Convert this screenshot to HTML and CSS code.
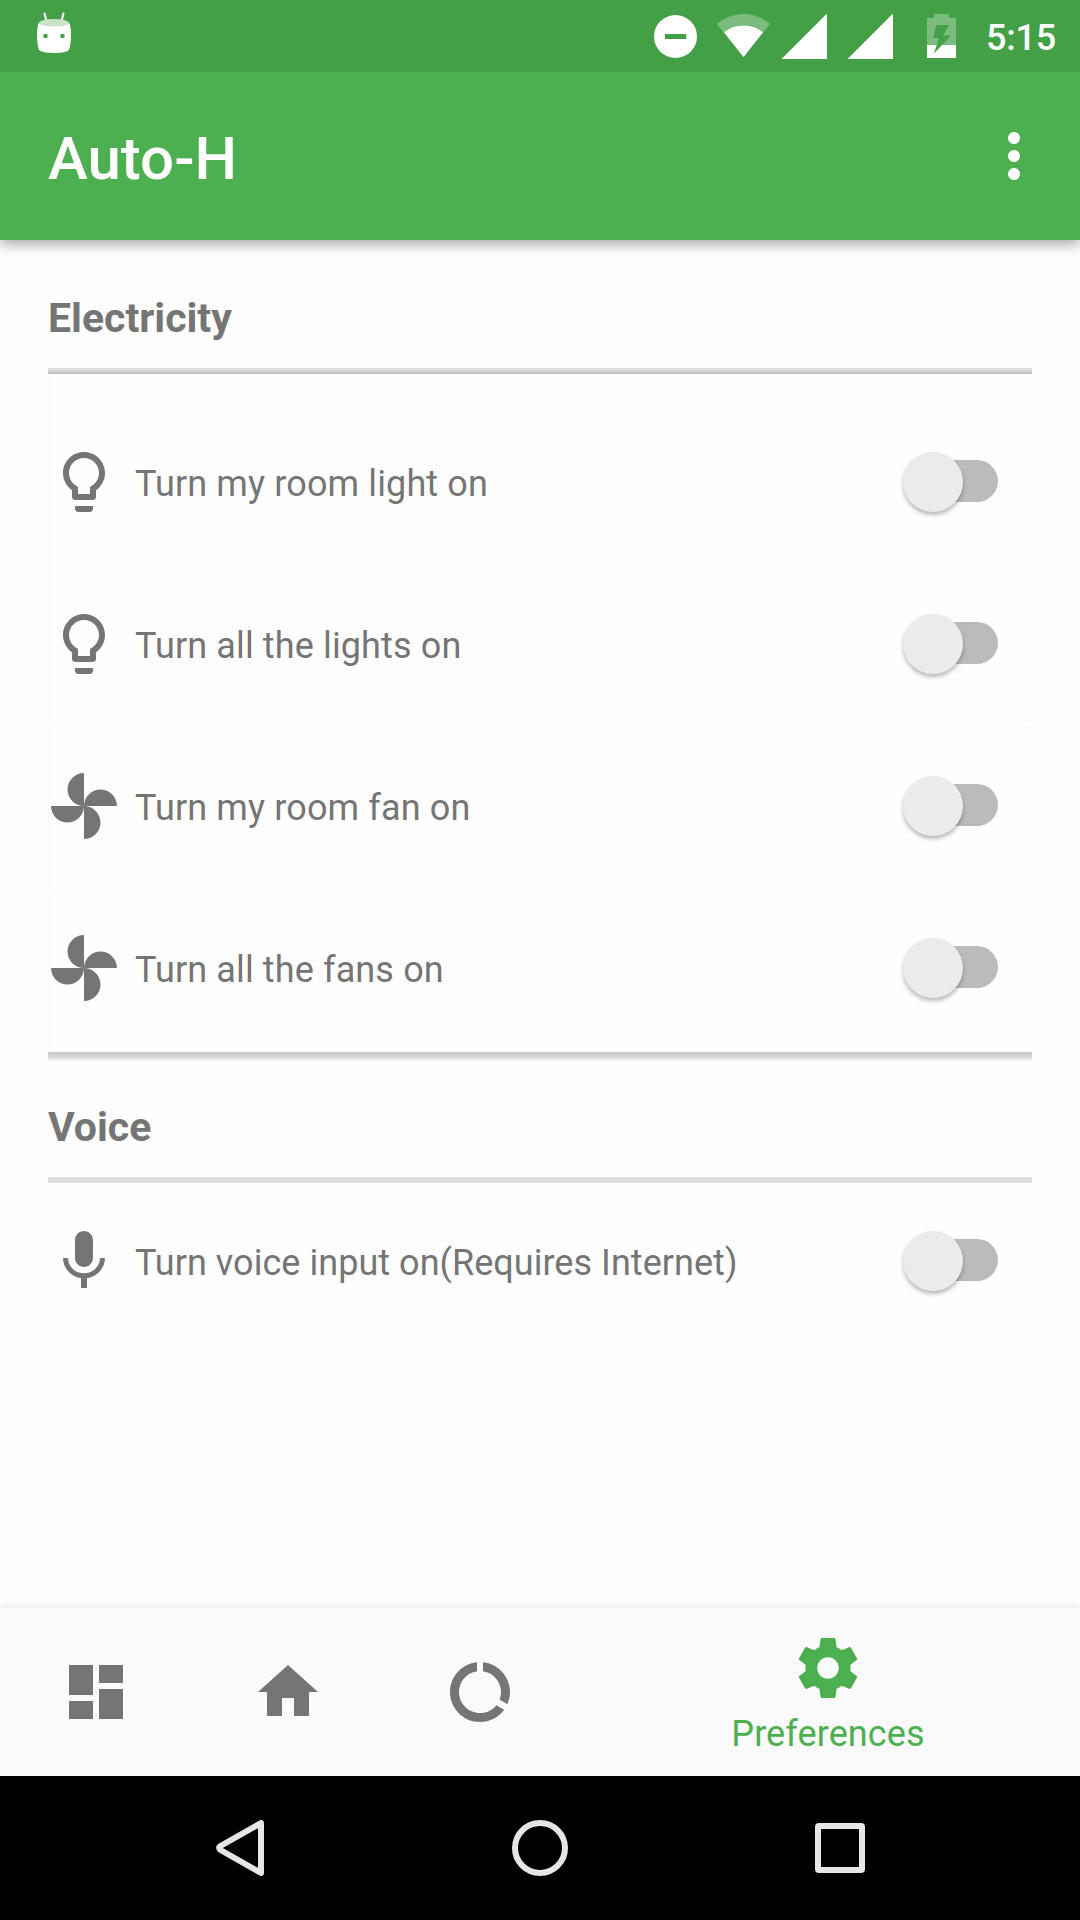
FILE: index.html
```html
<!DOCTYPE html>
<html lang="en">
<head>
<meta charset="utf-8">
<title>Auto-H</title>
<link rel="stylesheet" href="styles.css">
</head>
<body>
<div class="screen">
  <header class="header">
    <div class="status">
      <svg class="bot" width="36" height="44" viewBox="36 11 36 44"><path d="M44.500 13.500l2 8M63.500 13.500l-2 8" stroke="#fff" stroke-width="2" stroke-linecap="round" fill="none"/><path d="M39 22.500C41 27 67 27 69 22.500Q71 26 71 35Q71 44 69 50Q66 53 54 53Q42 53 39 50Q37 44 37 35Q37 26 39 22.500z" fill="#fff"/><ellipse cx="54" cy="22.800" rx="15" ry="3.700" fill="#c9e3ca"/><circle cx="45.500" cy="36" r="2.300" fill="#43a047"/><circle cx="62.500" cy="36" r="2.300" fill="#43a047"/></svg>
      <svg class="dnd" width="43" height="72" viewBox="654 0 43 72"><circle cx="675.500" cy="36.500" r="21.500" fill="#fff"/><path d="M665 34h21.300v5H665z" fill="#43a047"/></svg>
      <svg class="wifi" width="54" height="72" viewBox="717 0 54 72"><path d="M717 24Q729 14 743.500 14T770 24L743.500 57z" fill="#fff" opacity=".3"/><path d="M724 32.300Q732.500 25.500 743.500 25.500T763 32.300L743.500 57z" fill="#fff"/></svg>
      <svg class="signal-a" width="46" height="72" viewBox="782 0 46 72"><path d="M827 13.500V59H781.500z" fill="#fff"/></svg>
      <svg class="signal-b" width="46" height="72" viewBox="782 0 46 72"><path d="M827 13.500V59H781.500z" fill="#fff"/></svg>
      <svg class="battery" width="30" height="72" viewBox="927 0 30 72"><path d="M934 14h15v4h7v27h-29V18h7z" fill="#fff" opacity=".3"/><path d="M927 45h29v13h-29z" fill="#fff"/><path d="M936.500 25h12.500l-6 10.500h8L934 53.500l5-15.500h-5.800z" fill="#43a047"/></svg>
      <span class="time">5:15</span>
    </div>
    <div class="toolbar">
      <h1 class="title">Auto-H</h1>
      <svg class="icon" viewBox="0 0 24 24"><path fill="#fff" d="M12 8c1.100 0 2-.9 2-2s-.9-2-2-2-2 .9-2 2 .9 2 2 2zm0 2c-1.100 0-2 .9-2 2s.9 2 2 2 2-.9 2-2-.9-2-2-2zm0 6c-1.100 0-2 .9-2 2s.9 2 2 2 2-.9 2-2-.9-2-2-2z"/></svg>
    </div>
  </header>

  <main class="content">
    <h2 class="heading">Electricity</h2>
    <div class="rule rule-shaded"></div>
    <ul class="card">
      <li class="row">
        <svg class="icon" viewBox="0 0 24 24"><path d="M9 21c0 .55.45 1 1 1h4c.55 0 1-.45 1-1v-1H9v1zm3-19C8.140 2 5 5.140 5 9c0 2.380 1.190 4.470 3 5.740V17c0 .55.45 1 1 1h6c.55 0 1-.45 1-1v-2.260c1.810-1.270 3-3.360 3-5.740 0-3.860-3.140-7-7-7zm2.850 11.100l-.85.6V16h-4v-2.300l-.85-.6C7.800 12.160 7 10.630 7 9c0-2.760 2.240-5 5-5s5 2.240 5 5c0 1.630-.8 3.160-2.150 4.100z"/></svg>
        <span class="label">Turn my room light on</span><span class="switch"></span>
      </li>
      <li class="row">
        <svg class="icon" viewBox="0 0 24 24"><path d="M9 21c0 .55.45 1 1 1h4c.55 0 1-.45 1-1v-1H9v1zm3-19C8.140 2 5 5.140 5 9c0 2.380 1.190 4.470 3 5.740V17c0 .55.45 1 1 1h6c.55 0 1-.45 1-1v-2.260c1.810-1.270 3-3.360 3-5.740 0-3.860-3.140-7-7-7zm2.850 11.100l-.85.6V16h-4v-2.300l-.85-.6C7.800 12.160 7 10.630 7 9c0-2.760 2.240-5 5-5s5 2.240 5 5c0 1.630-.8 3.160-2.150 4.100z"/></svg>
        <span class="label">Turn all the lights on</span><span class="switch"></span>
      </li>
      <li class="row">
        <svg class="icon" viewBox="0 0 24 24"><path d="M12 12c0-3 2.500-5.500 5.500-5.500S23 9 23 12H12zm0 0c0 3-2.500 5.500-5.500 5.500S1 15 1 12h11zm0 0c-3 0-5.500-2.500-5.500-5.500S9 1 12 1v11zm0 0c3 0 5.500 2.500 5.500 5.500S15 23 12 23V12z"/></svg>
        <span class="label">Turn my room fan on</span><span class="switch"></span>
      </li>
      <li class="row">
        <svg class="icon" viewBox="0 0 24 24"><path d="M12 12c0-3 2.500-5.500 5.500-5.500S23 9 23 12H12zm0 0c0 3-2.500 5.500-5.500 5.500S1 15 1 12h11zm0 0c-3 0-5.500-2.500-5.500-5.500S9 1 12 1v11zm0 0c3 0 5.500 2.500 5.500 5.500S15 23 12 23V12z"/></svg>
        <span class="label">Turn all the fans on</span><span class="switch"></span>
      </li>
    </ul>
    <div class="card-shadow"></div>
    <h2 class="heading heading-voice">Voice</h2>
    <div class="rule"></div>
    <div class="row row-voice">
      <svg class="icon" viewBox="0 0 24 24"><path d="M12 14c1.660 0 2.990-1.340 2.990-3L15 5c0-1.660-1.340-3-3-3S9 3.340 9 5v6c0 1.660 1.340 3 3 3zm5.300-3c0 3-2.540 5.100-5.300 5.100S6.700 14 6.700 11H5c0 3.410 2.720 6.230 6 6.720V21h2v-3.280c3.280-.48 6-3.300 6-6.720h-1.700z"/></svg>
      <span class="label">Turn voice input on(Requires Internet)</span><span class="switch"></span>
    </div>
  </main>

  <nav class="tabs">
    <a class="tab"><svg class="icon" viewBox="0 0 24 24"><path d="M3 13h8V3H3v10zm0 8h8v-6H3v6zm10 0h8V11h-8v10zm0-18v6h8V3h-8z"/></svg></a>
    <a class="tab"><svg class="icon" viewBox="0 0 24 24"><path d="M10 20v-6h4v6h5v-8h3L12 3 2 12h3v8z"/></svg></a>
    <a class="tab"><svg class="icon" viewBox="0 0 24 24"><path d="M13 2.050v3.030c3.390.49 6 3.390 6 6.920 0 .9-.18 1.750-.48 2.540l2.600 1.530c.56-1.240.88-2.620.88-4.070 0-5.180-3.950-9.450-9-9.950zM12 19c-3.870 0-7-3.130-7-7 0-3.530 2.610-6.430 6-6.920V2.050c-5.060.5-9 4.760-9 9.950 0 5.520 4.470 10 9.990 10 3.310 0 6.240-1.610 8.060-4.090l-2.600-1.530C16.170 17.980 14.210 19 12 19z"/></svg></a>
    <a class="tab tab-active"><svg class="icon" viewBox="0 0 24 24"><path fill-rule="evenodd" d="M19.430 12.980c.04-.32.07-.64.07-.98s-.03-.66-.07-.98l2.110-1.650c.19-.15.24-.42.12-.64l-2-3.460c-.12-.22-.39-.3-.61-.22l-2.490 1c-.52-.4-1.080-.73-1.690-.98l-.38-2.650C14.460 2.180 14.250 2 14 2h-4c-.25 0-.46.18-.49.42l-.38 2.650c-.61.25-1.170.59-1.690.98l-2.490-1c-.23-.09-.49 0-.61.22l-2 3.460c-.13.22-.07.49.12.64l2.110 1.650c-.04.32-.07.65-.07.98s.03.66.07.98l-2.110 1.650c-.19.15-.24.42-.12.64l2 3.460c.12.22.39.3.61.22l2.490-1c.52.4 1.080.73 1.690.98l.38 2.650c.03.24.24.42.49.42h4c.25 0 .46-.18.49-.42l.38-2.650c.61-.25 1.170-.59 1.690-.98l2.490 1c.23.09.49 0 .61-.22l2-3.460c.12-.22.07-.49-.12-.64l-2.110-1.650zM12 15.600c-1.980 0-3.600-1.620-3.600-3.600s1.620-3.600 3.600-3.600 3.600 1.620 3.600 3.600-1.620 3.600-3.600 3.600z"/></svg><span class="tab-label">Preferences</span></a>
  </nav>

  <div class="system">
    <svg width="60" height="60" viewBox="210 1818 60 60"><path d="M261 1823V1873L220.500 1850Q217.800 1848 220.500 1846z"/></svg>
    <svg width="60" height="60" viewBox="510 1818 60 60"><circle cx="540" cy="1848" r="25"/></svg>
    <svg width="60" height="60" viewBox="810 1818 60 60"><rect x="818" y="1826" width="44" height="44" rx="1"/></svg>
  </div>
</div>
</body>
</html>
```
FILE: styles.css
```css
* { box-sizing: border-box; }
body { margin: 0; font-family: Roboto, sans-serif; color: #757575; }
h1, h2, ul { margin: 0; padding: 0; }
svg { display: block; flex: none; }

.screen { width: 1080px; height: 1920px; display: flex; flex-direction: column; background: #fefefe; overflow: hidden; }
.icon { width: 72px; height: 72px; fill: #757575; }

.header { height: 240px; background: #4caf50; box-shadow: 0 5px 12px rgba(0, 0, 0, .32); }
.status { height: 72px; display: flex; background: #43a047; color: #fff; }
.bot { margin: 11px 582px 0 36px; }
.wifi { margin-left: 20px; }
.signal-a { margin-left: 11px; }
.signal-b { margin-left: 20px; }
.battery { margin-left: 33px; }
.time { margin-left: 29px; font-size: 36px; font-weight: 500; line-height: 77px; letter-spacing: -.2px; }
.toolbar { height: 168px; display: flex; align-items: center; justify-content: space-between; padding: 0 30px 0 48px; }
.title { color: #fff; font-size: 60px; font-weight: 500; line-height: 70px; padding-top: 5px; }

.content { flex: 1; padding: 54px 48px 0; }
.heading { height: 74px; font-size: 41px; font-weight: 700; line-height: 48px; }
.rule { height: 6px; background: #dcdcdc; }
.rule-shaded { background: linear-gradient(#dcdcdc 30%, #cfcfcf 65%, #b8b8b8); }

.card { list-style: none; padding-top: 30px; border-left: 1px solid #fbfbfb; border-right: 1px solid #fcfcfc; }
.row { height: 162px; display: flex; align-items: center; padding: 0 33px 5px 0; border-bottom: 1px solid #fafafa; }
.card .icon { margin-left: -1px; }
.card .row { padding-right: 32px; }
.card .row:last-child { border-color: transparent; }
.label { flex: 1; margin-left: 15px; padding-top: 4px; font-size: 36px; line-height: 42px; letter-spacing: .13px; }
.switch { width: 96px; height: 60px; display: flex; align-items: center; margin-bottom: 1px; }
.switch::before { content: ""; width: 60px; height: 60px; border-radius: 50%; background: #ebebeb; box-shadow: 0 3px 4px rgba(0, 0, 0, .28); position: relative; z-index: 1; }
.switch::after { content: ""; width: 66px; height: 42px; margin: 0 0 1px -31px; border-radius: 21px; background: #bbb; }
.card-shadow { height: 10px; background: linear-gradient(#c8c8c8, #d2d2d2 40%, #f2f2f2 80%, #fefefe); }
.heading-voice { height: 115px; padding-top: 41px; }
.row-voice { height: 156px; padding-bottom: 0; border: 0; }
.row-voice .label { letter-spacing: .04px; }

.tabs { height: 168px; display: flex; background: #fafafa; box-shadow: 0 -1px 6px rgba(0, 0, 0, .1); }
.tab { width: 192px; display: flex; flex-direction: column; align-items: center; justify-content: center; }
.tab-active { flex: 1; justify-content: flex-start; padding-top: 24px; color: #4caf50; }
.tab-active .icon { fill: #4caf50; }
.tab-label { margin-top: 9px; font-size: 36px; line-height: 42px; letter-spacing: .1px; }

.system { height: 144px; display: flex; align-items: center; justify-content: space-between; padding: 0 210px; background: #000; }
.system svg { fill: none; stroke: #e6e6e6; stroke-width: 6; stroke-linejoin: round; }
```
